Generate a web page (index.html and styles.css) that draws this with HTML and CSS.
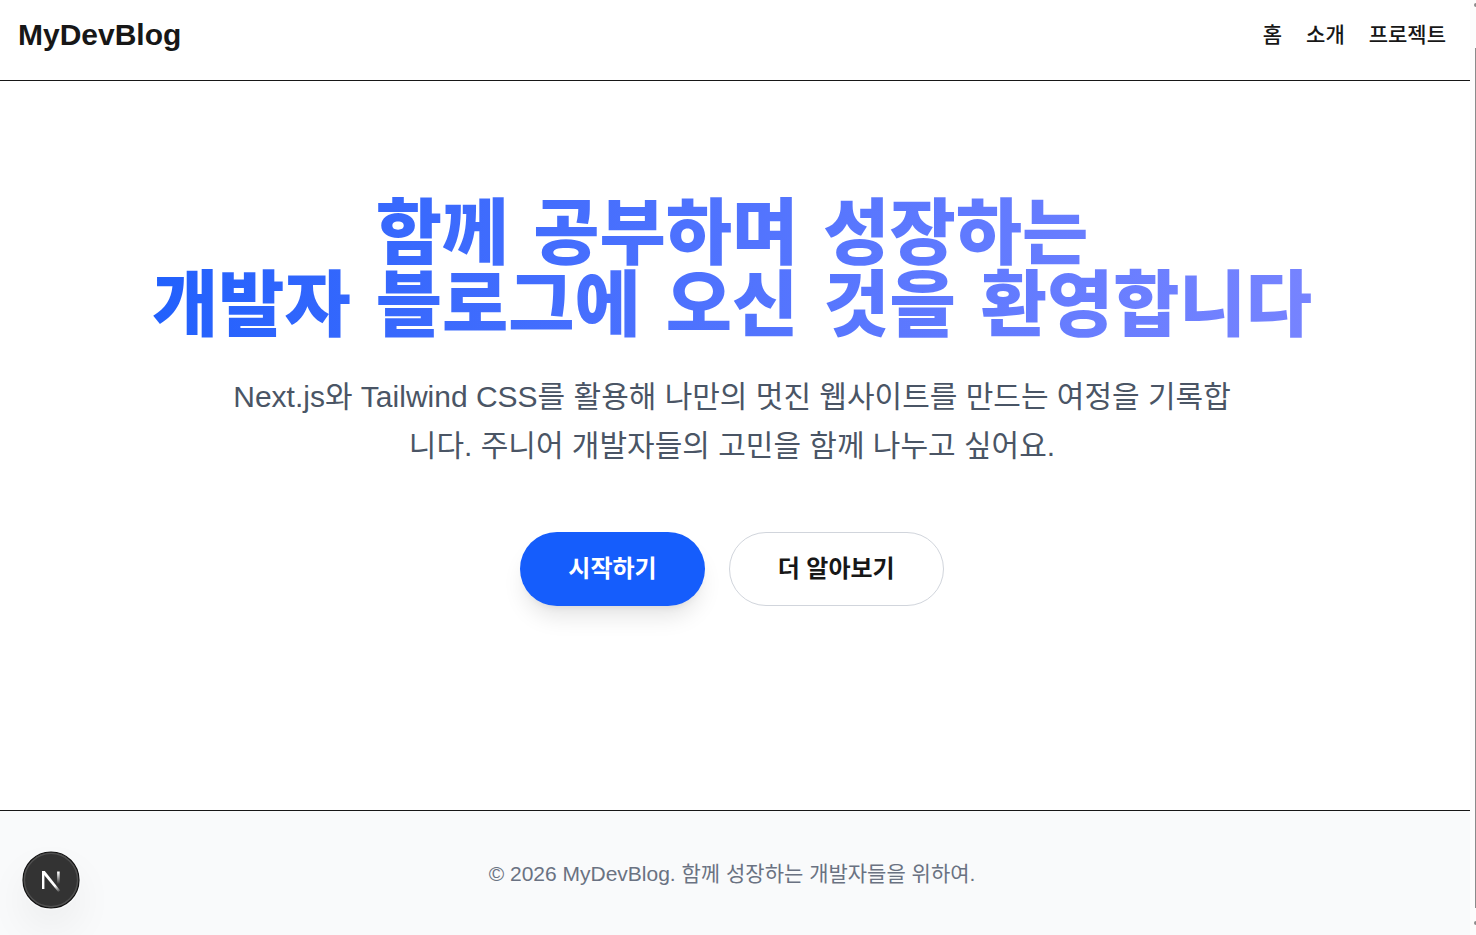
FILE: index.html
```html
<!DOCTYPE html>
<html lang="ko">
<head>
<meta charset="utf-8">
<meta name="viewport" content="width=device-width, initial-scale=1">
<title>MyDevBlog</title>
<link rel="stylesheet" href="styles.css">
</head>
<body>
<div class="page">
  <header class="header">
    <a class="logo" href="#">MyDevBlog</a>
    <nav class="nav">
      <a href="#">홈</a>
      <a href="#">소개</a>
      <a href="#">프로젝트</a>
    </nav>
  </header>
  <main class="hero">
    <h1 class="title">함께 공부하며 성장하는<br>개발자 블로그에 오신 것을 환영합니다</h1>
    <p class="lead">Next.js와 Tailwind CSS를 활용해 나만의 멋진 웹사이트를 만드는 여정을 기록합니다. 주니어 개발자들의 고민을 함께 나누고 싶어요.</p>
    <div class="actions">
      <button class="btn btn-primary" type="button">시작하기</button>
      <button class="btn btn-outline" type="button">더 알아보기</button>
    </div>
  </main>
  <footer class="footer">
    <p>© 2026 MyDevBlog. 함께 성장하는 개발자들을 위하여.</p>
  </footer>
</div>
<div class="scrollbar" aria-hidden="true">
  <span class="arrow"></span>
  <span class="thumb"></span>
  <span class="arrow"></span>
</div>
<button class="dev-badge" type="button" aria-label="Next.js">
  <svg width="60" height="60" viewBox="0 0 60 60" fill="none" aria-hidden="true">
    <defs>
      <linearGradient id="diag" x1="31" y1="32" x2="38" y2="42" gradientUnits="userSpaceOnUse">
        <stop offset="0.4" stop-color="#fff"/>
        <stop offset="1" stop-color="#fff" stop-opacity="0.1"/>
      </linearGradient>
      <linearGradient id="stem" x1="0" y1="21" x2="0" y2="34" gradientUnits="userSpaceOnUse">
        <stop offset="0.1" stop-color="#fff"/>
        <stop offset="1" stop-color="#fff" stop-opacity="0"/>
      </linearGradient>
    </defs>
    <circle cx="30" cy="30" r="28" fill="#333" stroke="#111" stroke-width="1.2"/>
    <circle cx="30" cy="30" r="26.6" stroke="#505050" stroke-width="1.4"/>
    <path d="M22.2 39V21.5" stroke="#fff" stroke-width="2.4"/>
    <path d="M21 21H23.8L39.2 40.5L37.3 42L21 22.4Z" fill="url(#diag)"/>
    <path d="M37.4 21.5V35" stroke="url(#stem)" stroke-width="2.6"/>
  </svg>
</button>
</body>
</html>
```

FILE: styles.css
```css
* {
  box-sizing: border-box;
}

body {
  margin: 0;
  background: #fff;
  color: #171717;
  font-family: "Liberation Sans", "Noto Sans CJK KR", sans-serif;
}

.page {
  display: flex;
  flex-direction: column;
  min-height: 100vh;
  margin-right: 6px;
}

.header {
  display: flex;
  align-items: center;
  justify-content: space-between;
  padding: 16px 24px 26px 18px;
  border-bottom: 1px solid #171717;
}

.header a {
  color: inherit;
  text-decoration: none;
}

.logo {
  font-size: 30px;
  font-weight: 700;
  line-height: 38px;
}

.nav {
  display: flex;
  gap: 24px;
  font-size: 21px;
  font-weight: 500;
  line-height: 30px;
}

.hero {
  display: flex;
  flex-direction: column;
  align-items: center;
  padding: 116px 30px 204px 24px;
  text-align: center;
}

.title {
  width: 100%;
  max-width: 1344px;
  margin: 0 0 31px;
  font-family: "DejaVu Sans", "Noto Sans CJK KR", sans-serif;
  font-size: 72px;
  font-weight: 900;
  line-height: 72px;
  color: transparent;
  background: linear-gradient(to right, #155dfc, #7c86ff);
  background: linear-gradient(to right in oklab, #155dfc, #7c86ff);
  background-clip: text;
  -webkit-background-clip: text;
}

.lead {
  max-width: 1008px;
  margin: 0 0 62px;
  color: #4a5565;
  font-size: 30px;
  line-height: 49px;
}

.actions {
  display: flex;
  flex-wrap: wrap;
  justify-content: center;
  gap: 24px;
}

.btn {
  padding: 18px 48px;
  border: 0;
  border-radius: 999px;
  font: 700 24px/36px "Liberation Sans", "Noto Sans CJK KR", sans-serif;
}

.btn-primary {
  background: #155dfc;
  color: #fff;
  box-shadow: 0 15px 22px -4px rgb(0 0 0 / 10%), 0 6px 9px -6px rgb(0 0 0 / 10%);
}

.btn-outline {
  border: 1px solid #d1d5dc;
  background: transparent;
  color: #171717;
}

.footer {
  flex: 1;
  padding: 48px 30px 46px 24px;
  border-top: 1px solid #171717;
  background: #f9fafb;
  color: #6a7282;
  font-size: 21px;
  line-height: 30px;
  text-align: center;
}

.footer p {
  margin: 0;
}

.scrollbar {
  position: fixed;
  top: 0;
  right: 0;
  bottom: 0;
  display: flex;
  flex-direction: column;
  align-items: flex-end;
  width: 6px;
  padding: 3px 0 10px;
  background: #fcfcfc;
}

.arrow {
  width: 2px;
  height: 4px;
  border-radius: 2px 0 0 2px;
  background: #8b8b8b;
}

.thumb {
  flex: 1;
  width: 1px;
  margin: 41px 0 13px;
  background: #8b8b8b;
}

.dev-badge {
  position: fixed;
  left: 21px;
  bottom: 25px;
  width: 60px;
  height: 60px;
  padding: 0;
  border: 0;
  border-radius: 50%;
  background: none;
  box-shadow: 0 20px 44px -4px rgb(0 0 0 / 7%);
}

.dev-badge svg {
  display: block;
}
```
